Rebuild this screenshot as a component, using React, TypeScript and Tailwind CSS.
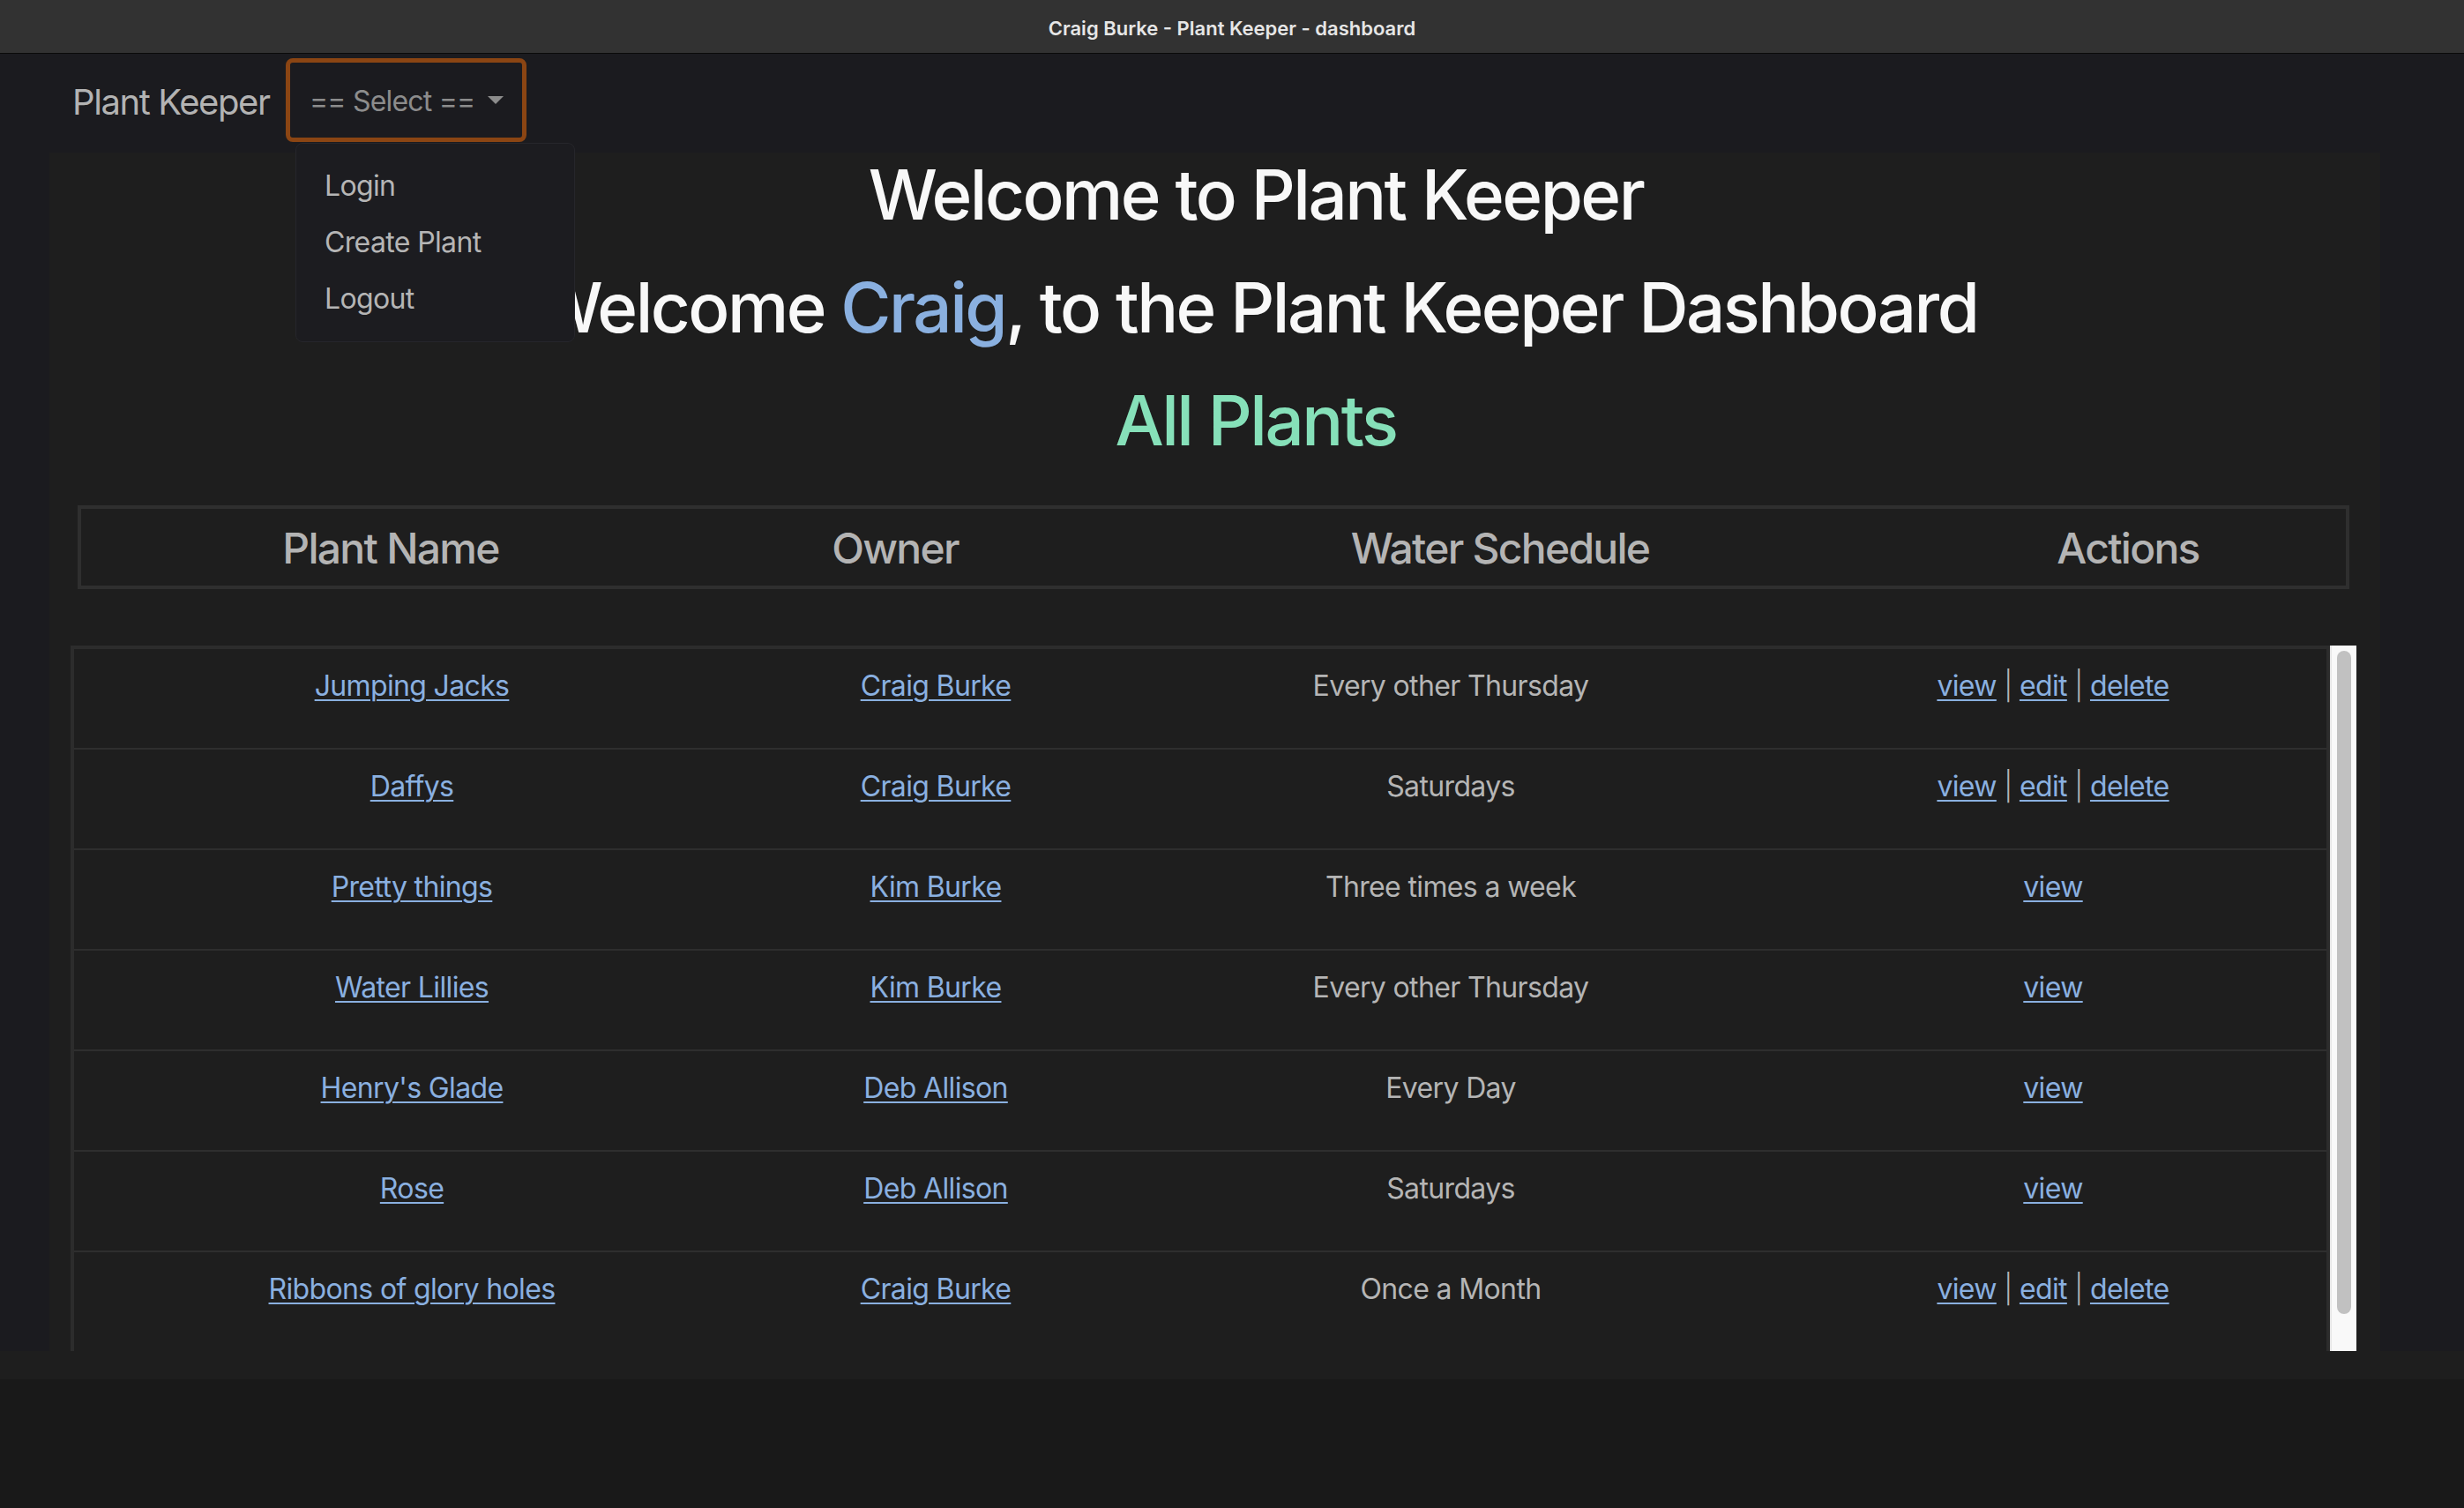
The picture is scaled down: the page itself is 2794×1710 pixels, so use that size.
import React from "react";

type Row = { name: string; owner: string; schedule: string; own: boolean };

const rows: Row[] = [
  { name: "Jumping Jacks", owner: "Craig Burke", schedule: "Every other Thursday", own: true },
  { name: "Daffys", owner: "Craig Burke", schedule: "Saturdays", own: true },
  { name: "Pretty things", owner: "Kim Burke", schedule: "Three times a week", own: false },
  { name: "Water Lillies", owner: "Kim Burke", schedule: "Every other Thursday", own: false },
  { name: "Henry's Glade", owner: "Deb Allison", schedule: "Every Day", own: false },
  { name: "Rose", owner: "Deb Allison", schedule: "Saturdays", own: false },
  { name: "Ribbons of glory holes", owner: "Craig Burke", schedule: "Once a Month", own: true },
];

function Link({ children }: { children: React.ReactNode }) {
  return (
    <a href="#" className="text-[#8ab0e0] underline decoration-[2px] underline-offset-[4px]">
      {children}
    </a>
  );
}

export default function App() {
  return (
    <div className="w-[2794px] h-[1710px] overflow-hidden bg-[#191919] font-['Inter',sans-serif] flex flex-col">
      {/* window title bar */}
      <div className="h-[61px] shrink-0 bg-[#323232] border-b border-[#0a0a0a] flex items-center justify-center pt-[5px]">
        <span className="text-[22px] font-semibold text-[#e6e6e6]">
          Craig Burke - Plant Keeper - dashboard
        </span>
      </div>

      <div className="h-[1471px] shrink-0 bg-[#1b1b1f] flex flex-col">
        {/* navbar */}
        <nav className="h-[112px] shrink-0 flex items-start pl-[82px] relative z-10">
          <span className="w-[242px] mt-[25px] text-[40px] leading-[60px] text-[#b3b3b3] tracking-[-0.035em]">
            Plant Keeper
          </span>
          <div className="relative mt-[5px]">
            <div className="w-[273px] h-[95px] border-[5px] border-[#8b4513] rounded-[8px] flex items-center pl-[22px] pr-[21px] pt-[2px]">
              <span className="flex-1 text-[32px] leading-[48px] text-[#8c8c8c] tracking-[-0.025em]">
                == Select ==
              </span>
              <svg width="18" height="10" viewBox="0 0 18 10" className="mb-[2px]">
                <polygon points="0,0 18,0 9,9" fill="#8c8c8c" />
              </svg>
            </div>
            <div className="absolute left-[11px] top-[96px] w-[317px] bg-[#1c1c20] border border-[#26262b] rounded-[8px] py-[16px] flex flex-col">
              {["Login", "Create Plant", "Logout"].map((t) => (
                <span
                  key={t}
                  className="px-[32px] py-[8px] text-[32px] leading-[48px] text-[#b5b5b5] tracking-[-0.02em]"
                >
                  {t}
                </span>
              ))}
            </div>
          </div>
        </nav>

        {/* content panel */}
        <main className="flex-1 ml-[56px] mr-[95px] bg-[#1e1e1e] pl-[24px] pr-[27px] flex flex-col overflow-hidden">
          <div className="pl-[96px] flex flex-col items-center text-[78px] leading-[96px] font-medium tracking-[-0.032em]">
            <h1 className="text-[#f8f8f8] mb-[32px]">Welcome to Plant Keeper</h1>
            <h1 className="text-[#f8f8f8] mb-[32px]">
              Welcome <span className="text-[#8ab0e0]">Craig</span>, to the Plant Keeper Dashboard
            </h1>
            <h1 className="text-[#86e0b9] mb-[48px]">All Plants</h1>
          </div>

          {/* table header */}
          <div className="mx-[8px] h-[96px] border-[4px] border-[#2f2f2f] flex items-center pt-[3px] text-[48px] leading-[72px] font-medium text-[#b4b4b4] tracking-[-0.036em]">
            <div className="w-[702px] text-center">Plant Name</div>
            <div className="w-[442px] text-center">Owner</div>
            <div className="w-[930px] text-center">Water Schedule</div>
            <div className="w-[494px] text-center">Actions</div>
          </div>

          {/* scrolling body */}
          <div className="mt-[64px] h-[800px] flex">
            <div className="flex-1 border-l-[4px] border-t-[4px] border-r-[4px] border-[#2c2c2c] flex flex-col text-[32px] leading-[48px] text-[#b5b5b5] tracking-[-0.02em]">
              {rows.map((r, i) => (
                <div
                  key={r.name}
                  className={
                    "shrink-0 flex pt-[18px] text-center" +
                    (i < rows.length - 1 ? " border-b-[2px] border-[#2e2e2e] h-[114px]" : " h-[112px]")
                  }
                >
                  <div className="w-[766px]">
                    <Link>{r.name}</Link>
                  </div>
                  <div className="w-[422px]">
                    <Link>{r.owner}</Link>
                  </div>
                  <div className="w-[746px]">{r.schedule}</div>
                  <div className="w-[620px]">
                    <Link>view</Link>
                    {r.own && (
                      <>
                        <span className="font-light"> | </span>
                        <Link>edit</Link>
                        <span className="font-light"> | </span>
                        <Link>delete</Link>
                      </>
                    )}
                  </div>
                </div>
              ))}
            </div>
            <div className="w-[30px] bg-[#f9f9f9] border-l-[2px] border-[#e6e6e6] pl-[6px] pt-[6px]">
              <div className="w-[16px] h-[752px] rounded-full bg-[#c1c1c1]" />
            </div>
          </div>
        </main>
      </div>

      <div className="h-[32px] shrink-0 bg-[#1e1e1e]" />
      <div className="flex-1 bg-[#191919]" />
    </div>
  );
}
